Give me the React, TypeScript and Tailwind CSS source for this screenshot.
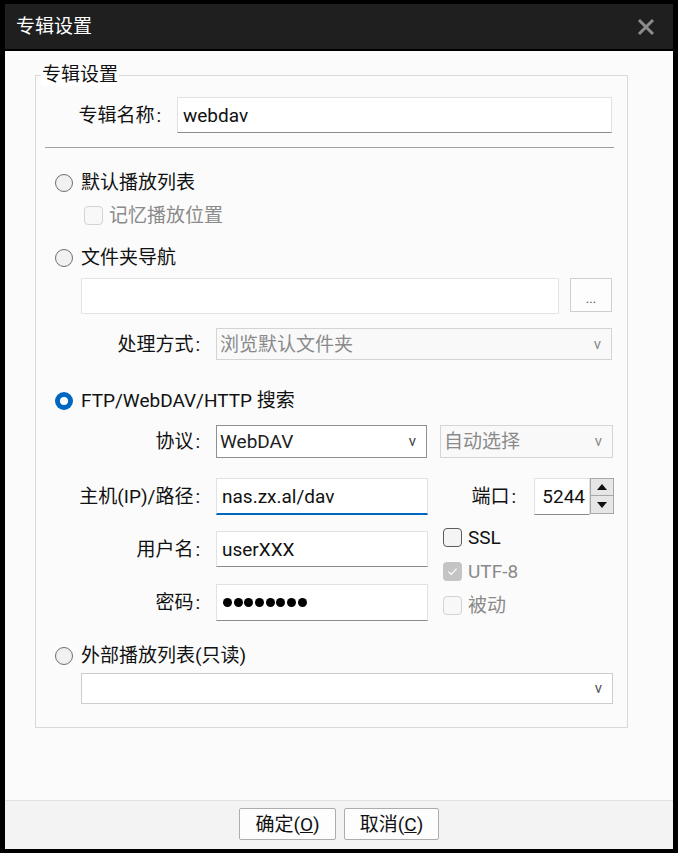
import React from 'react';

const Radio: React.FC<{ checked?: boolean; label: string }> = ({ checked, label }) => (
  <div className="ml-[19px] flex h-[29px] items-center gap-[8px]">
    {checked ? (
      <span className="flex h-[18px] w-[18px] items-center justify-center rounded-full bg-[#0067c0]">
        <span className="h-[8px] w-[8px] rounded-full bg-white" />
      </span>
    ) : (
      <span className="h-[18px] w-[18px] rounded-full border border-[#6f6f6f] bg-[#f1f1f1]" />
    )}
    <span className="text-[#111]">{label}</span>
  </div>
);

type BoxKind = 'normal' | 'disabled' | 'disabledChecked';

const Check: React.FC<{ kind: BoxKind; label: string }> = ({ kind, label }) => (
  <div className="flex h-[34px] items-center gap-[6px]">
    {kind === 'normal' && <span className="h-[19px] w-[19px] rounded-[4px] border border-[#5c5c5c] bg-[#f4f4f4]" />}
    {kind === 'disabled' && <span className="h-[19px] w-[19px] rounded-[4px] border border-[#d3d3d3] bg-[#f8f8f8]" />}
    {kind === 'disabledChecked' && (
      <span className="flex h-[19px] w-[19px] items-center justify-center rounded-[4px] bg-[#c4c4c4]">
        <svg width="11" height="9" viewBox="0 0 11 9">
          <path d="M1.5 4.8 L4.2 7.4 L9.6 1.6" fill="none" stroke="white" strokeWidth="1.2" />
        </svg>
      </span>
    )}
    <span className={kind === 'normal' ? 'text-[#111]' : 'text-[#8a8a8a]'}>{label}</span>
  </div>
);

// label text with the little gap the original puts before the colon
const Colon: React.FC<{ text: string }> = ({ text }) => (
  <>
    {text}
    <span className="ml-[2px]">:</span>
  </>
);

const Label: React.FC<{ text: string }> = ({ text }) => (
  <div className="w-[165px] pr-[1px] text-right text-[#111]">
    <Colon text={text} />
  </div>
);

const Field: React.FC<{ w: string; h: string; children?: React.ReactNode; focus?: boolean }> = ({ w, h, children, focus }) => (
  <div
    className={`${w} ${h} flex items-center border bg-white pl-[5px] text-[#111] ${
      focus ? 'border-[#e2e2e2] border-b-2 border-b-[#0067c0]' : 'border-[#e2e2e2] border-b-[#8a8a8a]'
    }`}
  >
    {children}
  </div>
);

const Select: React.FC<{ w: string; h: string; text?: string; disabled?: boolean }> = ({ w, h, text, disabled }) => (
  <div
    className={`${w} ${h} flex items-center justify-between border pl-[3px] pr-[10px] ${
      disabled ? 'border-[#d4d4d4] bg-[#f9f9f9] text-[#8a8a8a]' : 'border-[#8f8f8f] bg-white text-[#222]'
    }`}
  >
    <span>{text}</span>
    <span className={`text-[15px] ${disabled ? 'text-[#8a8a8a]' : 'text-[#444]'}`}>v</span>
  </div>
);

const App: React.FC = () => {
  return (
    <div className="flex h-[853px] w-[678px] flex-col bg-black px-[5px] py-[4px] font-['Roboto','Noto_Sans_CJK_SC',sans-serif] text-[19px] leading-none">
      <div className="flex h-[45px] items-center justify-between bg-[#1f1f1f] pl-[11px] pr-[18px]">
        <span className="text-[19px] text-white">专辑设置</span>
        <svg width="18" height="18" viewBox="0 0 18 18">
          <path d="M2 2 L16 16 M16 2 L2 16" stroke="#8c8c8c" strokeWidth="3" />
        </svg>
      </div>

      <div className="mt-[2px] flex-1 bg-[#fbfbfb] pt-[24px]">
        <div className="ml-[30px] w-[593px] border border-[#d9d9d9] pb-[23px]">
          <div className="-mt-[12px] ml-[5px] w-fit bg-white px-[1px] leading-[22px] text-[#111]">专辑设置</div>

          <div className="mt-[11px] flex items-center">
            <div className="w-[125px] text-right text-[#111]">
              <Colon text="专辑名称" />
            </div>
            <div className="ml-[16px]">
              <Field w="w-[435px]" h="h-[36px]">webdav</Field>
            </div>
          </div>

          <div className="ml-[9px] mt-[14px] h-px w-[569px] bg-[#a0a0a0]" />

          <div className="mt-[20px]">
            <Radio label="默认播放列表" />
          </div>
          <div className="ml-[48px] mt-[4px] flex h-[29px] items-center">
            <Check kind="disabled" label="记忆播放位置" />
          </div>
          <div className="mt-[13px]">
            <Radio label="文件夹导航" />
          </div>

          <div className="ml-[45px] mt-[6px] flex items-start gap-[11px]">
            <div className="h-[36px] w-[478px] border border-[#e4e4e4] bg-white" />
            <div className="flex h-[34px] w-[42px] items-center justify-center border border-[#cfcfcf] bg-[#fdfdfd] pt-[6px] text-[13px] text-[#555]">
              ...
            </div>
          </div>

          <div className="mt-[14px] flex items-center">
            <Label text="处理方式" />
            <div className="ml-[15px]">
              <Select w="w-[396px]" h="h-[32px]" text="浏览默认文件夹" disabled />
            </div>
          </div>

          <div className="mt-[26px]">
            <Radio checked label="FTP/WebDAV/HTTP 搜索" />
          </div>

          <div className="mt-[10px] flex items-center">
            <Label text="协议" />
            <div className="ml-[15px] flex gap-[13px]">
              <Select w="w-[211px]" h="h-[33px]" text="WebDAV" />
              <Select w="w-[173px]" h="h-[33px]" text="自动选择" disabled />
            </div>
          </div>

          <div className="mt-[20px] flex items-center">
            <Label text="主机(IP)/路径" />
            <div className="ml-[15px]">
              <Field w="w-[212px]" h="h-[37px]" focus>
                nas.zx.al/dav
              </Field>
            </div>
            <div className="w-[88px] text-right text-[#111]">
              <Colon text="端口" />
            </div>
            <div className="ml-[18px] flex h-[37px] w-[80px]">
              <div className="flex flex-1 items-center justify-end border border-[#e2e2e2] border-b-[#8a8a8a] bg-white pr-[4px] text-[#111]">
                5244
              </div>
              <div className="flex w-[24px] flex-col">
                <div className="flex h-[18px] items-center justify-center border border-[#a8a8a8] bg-[#e6e6e6]">
                  <svg width="10" height="6" viewBox="0 0 10 6">
                    <path d="M0 6 L5 0 L10 6 Z" fill="#111" />
                  </svg>
                </div>
                <div className="flex h-[18px] items-center justify-center border border-t-0 border-[#a8a8a8] bg-[#e6e6e6]">
                  <svg width="10" height="6" viewBox="0 0 10 6">
                    <path d="M0 0 L10 0 L5 6 Z" fill="#111" />
                  </svg>
                </div>
              </div>
            </div>
          </div>

          <div className="flex">
            <div className="mt-[16px] flex flex-col gap-[17px]">
              <div className="flex items-center">
                <Label text="用户名" />
                <div className="ml-[15px]">
                  <Field w="w-[212px]" h="h-[36px]">userXXX</Field>
                </div>
              </div>
              <div className="flex items-center">
                <Label text="密码" />
                <div className="ml-[15px]">
                  <Field w="w-[212px]" h="h-[37px]">
                    <div className="ml-[1px] flex gap-[1.7px]">
                      {[0, 1, 2, 3, 4, 5, 6, 7].map((i) => (
                        <span key={i} className="h-[9px] w-[9px] rounded-full bg-black" />
                      ))}
                    </div>
                  </Field>
                </div>
              </div>
            </div>
            <div className="ml-[15px] mt-[5px] flex flex-col">
              <Check kind="normal" label="SSL" />
              <Check kind="disabledChecked" label="UTF-8" />
              <Check kind="disabled" label="被动" />
            </div>
          </div>

          <div className="mt-[19px]">
            <Radio label="外部播放列表(只读)" />
          </div>
          <div className="ml-[45px] mt-[3px]">
            <div className="flex h-[31px] w-[532px] items-center justify-end border border-[#cdcdcd] bg-white pr-[10px]">
              <span className="text-[15px] text-[#555]">v</span>
            </div>
          </div>
        </div>
      </div>

      <div className="flex h-[49px] justify-center gap-[8px] border-t border-[#e0e0e0] bg-[#f3f3f3] pt-[7px]">
        <div className="flex h-[32px] w-[97px] items-center justify-center rounded-[2px] border border-[#adadad] bg-[#fdfdfd] text-[#111]">
          确定(<span className="underline">O</span>)
        </div>
        <div className="flex h-[32px] w-[95px] items-center justify-center rounded-[2px] border border-[#adadad] bg-[#fdfdfd] text-[#111]">
          取消(<span className="underline">C</span>)
        </div>
      </div>
    </div>
  );
};

export default App;
